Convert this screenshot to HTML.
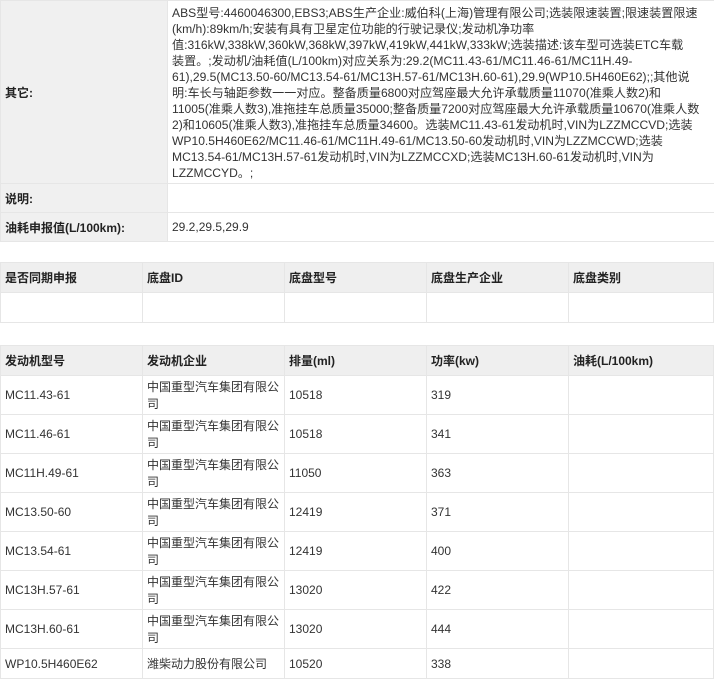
<!DOCTYPE html>
<html><head><meta charset="utf-8"><style>
*{margin:0;padding:0;box-sizing:border-box}
body{width:714px;height:679px;overflow:hidden;background:#fff;font-family:"Liberation Sans","Noto Sans CJK SC",sans-serif;font-size:12px;color:#333}
table{border-collapse:collapse;position:absolute;left:0;table-layout:fixed}
td{border:1px solid #e6e6e6;padding:0 4px;vertical-align:middle;overflow:hidden}
.l{background:#f0f0f0;font-weight:bold;color:#222}
.h td{background:#efefef;font-weight:bold;color:#222}
.t{line-height:16px;white-space:nowrap;font-size:12.1px;letter-spacing:0px;vertical-align:top;padding-top:4px}
</style></head><body>
<table style="top:0;width:714px">
<col style="width:167px"><col style="width:547px">
<tr style="height:183px"><td class="l">其它:</td><td class="t">ABS型号:4460046300,EBS3;ABS生产企业:威伯科(上海)管理有限公司;选装限速装置;限速装置限速<br>(km/h):89km/h;安装有具有卫星定位功能的行驶记录仪;发动机净功率<br>值:316kW,338kW,360kW,368kW,397kW,419kW,441kW,333kW;选装描述:该车型可选装ETC车载<br>装置。;发动机/油耗值(L/100km)对应关系为:29.2(MC11.43-61/MC11.46-61/MC11H.49-<br>61),29.5(MC13.50-60/MC13.54-61/MC13H.57-61/MC13H.60-61),29.9(WP10.5H460E62);;其他说<br>明:车长与轴距参数一一对应。整备质量6800对应驾座最大允许承载质量11070(准乘人数2)和<br>11005(准乘人数3),准拖挂车总质量35000;整备质量7200对应驾座最大允许承载质量10670(准乘人数<br>2)和10605(准乘人数3),准拖挂车总质量34600。选装MC11.43-61发动机时,VIN为LZZMCCVD;选装<br>WP10.5H460E62/MC11.46-61/MC11H.49-61/MC13.50-60发动机时,VIN为LZZMCCWD;选装<br>MC13.54-61/MC13H.57-61发动机时,VIN为LZZMCCXD;选装MC13H.60-61发动机时,VIN为<br>LZZMCCYD。;</td></tr>
<tr style="height:29px"><td class="l">说明:</td><td></td></tr>
<tr style="height:29px"><td class="l">油耗申报值(L/100km):</td><td>29.2,29.5,29.9</td></tr>
</table>
<table style="top:262px;width:713px">
<col style="width:142px"><col style="width:142px"><col style="width:142px"><col style="width:142px"><col style="width:145px">
<tr class="h" style="height:30px"><td>是否同期申报</td><td>底盘ID</td><td>底盘型号</td><td>底盘生产企业</td><td>底盘类别</td></tr>
<tr style="height:30px"><td></td><td></td><td></td><td></td><td></td></tr>
</table>
<table style="top:345px;width:713px">
<col style="width:142px"><col style="width:142px"><col style="width:142px"><col style="width:142px"><col style="width:145px">
<tr class="h" style="height:30px"><td>发动机型号</td><td>发动机企业</td><td>排量(ml)</td><td>功率(kw)</td><td>油耗(L/100km)</td></tr>
<tr style="height:39px"><td>MC11.43-61</td><td>中国重型汽车集团有限公司</td><td>10518</td><td>319</td><td></td></tr>
<tr style="height:39px"><td>MC11.46-61</td><td>中国重型汽车集团有限公司</td><td>10518</td><td>341</td><td></td></tr>
<tr style="height:39px"><td>MC11H.49-61</td><td>中国重型汽车集团有限公司</td><td>11050</td><td>363</td><td></td></tr>
<tr style="height:39px"><td>MC13.50-60</td><td>中国重型汽车集团有限公司</td><td>12419</td><td>371</td><td></td></tr>
<tr style="height:39px"><td>MC13.54-61</td><td>中国重型汽车集团有限公司</td><td>12419</td><td>400</td><td></td></tr>
<tr style="height:39px"><td>MC13H.57-61</td><td>中国重型汽车集团有限公司</td><td>13020</td><td>422</td><td></td></tr>
<tr style="height:39px"><td>MC13H.60-61</td><td>中国重型汽车集团有限公司</td><td>13020</td><td>444</td><td></td></tr>
<tr style="height:30px"><td>WP10.5H460E62</td><td>潍柴动力股份有限公司</td><td>10520</td><td>338</td><td></td></tr>
</table>
</body></html>
